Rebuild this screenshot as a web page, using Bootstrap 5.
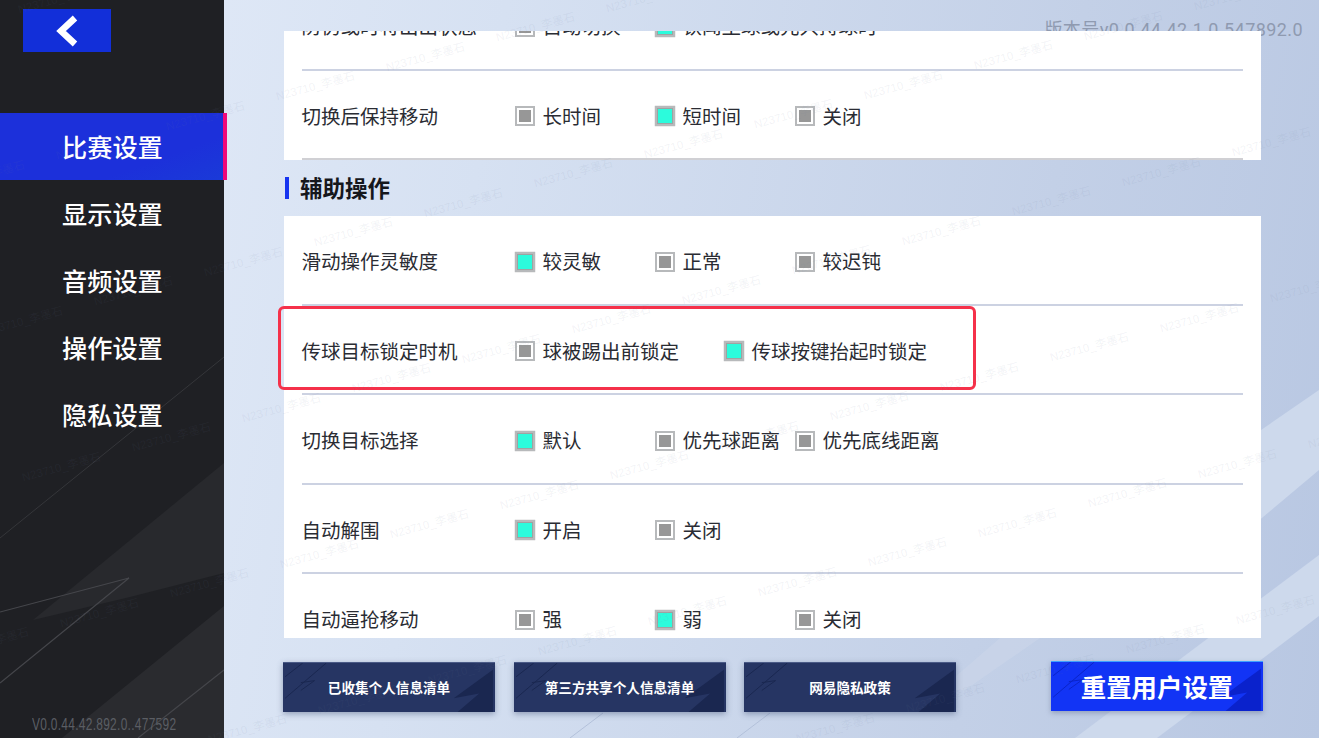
<!doctype html>
<html lang="zh-CN">
<head>
<meta charset="utf-8">
<title>设置</title>
<link rel="stylesheet" href="https://cdn.jsdelivr.net/npm/bootstrap@5.3.0/dist/css/bootstrap.min.css">
<style>
html,body{height:100%;}
body{width:1319px;height:738px;overflow:hidden;position:relative;font-family:"Noto Sans CJK SC","Noto Sans",sans-serif;color:#2a2c33;background:linear-gradient(100deg,#e4ecf9 0%,#d6e1f2 35%,#c3d0e7 75%,#b8c7e2 100%);}
.bg-art{position:absolute;left:0;top:0;width:1319px;height:738px;}
.side{width:224px;height:738px;background:#1f2024;position:relative;flex:none;}
.side-art{position:absolute;left:0;top:0;width:224px;height:738px;}
.back-btn{width:88px;height:43px;background:#122fd9;margin:9px 0 0 23px;border:0;padding:0;position:relative;}
.menu{margin-top:61px;position:relative;width:227px;}
.menu-item{height:67px;line-height:67px;font-size:25.2px;font-weight:500;color:#fff;padding-left:62px;text-decoration:none;display:block;}
.menu-item.is-on{background:linear-gradient(160deg,#1c30da 70%,#1a3ad8 100%);border-right:4px solid #f0087a;color:#fff;}
.vers{position:absolute;left:32px;bottom:1px;font-family:"Liberation Sans",sans-serif;font-weight:400;font-size:16px;color:#5b5e64;letter-spacing:.4px;white-space:nowrap;transform:scaleX(.745);transform-origin:left center;}
.main-col{width:980px;margin-left:59px;padding-top:31px;position:relative;}
.build{position:absolute;right:-40px;top:16px;font-family:Roboto,"Noto Sans CJK SC",sans-serif;font-size:18px;color:#8f9ab0;white-space:nowrap;letter-spacing:.42px;}
.sheet{width:977px;height:607px;margin-left:1px;overflow:hidden;position:relative;}
.sheet-inner{margin-top:-50px;}
.opt-block{background:#fff;}
.opt-row{height:89.5px;padding:0 18px;display:flex;align-items:flex-start;font-size:19.5px;line-height:28px;position:relative;white-space:nowrap;}
.opt-row::after{content:"";position:absolute;left:18px;right:18px;bottom:0;height:2px;background:#ccd2e2;}
.opt-row:last-child::after{height:2px;background:#d0d0d4;}
.opt-label{width:213px;padding-top:31px;flex:none;margin-left:-.5px;margin-right:.5px;}
.opt{display:flex;align-items:center;gap:7.5px;padding-top:31px;width:140px;flex:none;}
.opt.wide{width:209px;}
.box{width:20px;height:20px;border:2px solid #b7b9bb;background:#fff;padding:2px;flex:none;display:block;margin-top:1px;}
.box>i{display:block;width:100%;height:100%;background:#979797;}
.box.is-on{background:#9ea3a2;padding:1px;box-shadow:0 0 1px #999;}
.box.is-on>i{background:#2cfbdc;}
.sec-head{height:56px;display:flex;align-items:center;font-size:22.5px;font-weight:700;color:#15171c;}
.sec-head::before{content:"";width:4px;height:22px;background:#1634f0;margin-right:11px;margin-left:1px;}
.foot{margin-top:24px;display:flex;gap:18.5px;align-items:flex-start;}
.dark-btn{width:212px;height:50px;border:0;border-radius:0;position:relative;background:#263563;color:#fff;font-size:13.6px;font-weight:700;padding:0;overflow:hidden;box-shadow:0 2px 6px rgba(60,75,110,.45);border-top:1px solid #4a5a86;}
.reset-btn{width:212px;height:50px;border:0;border-radius:0;position:relative;background:#1234f5;color:#fff;font-size:25.4px;font-weight:700;padding:0;overflow:hidden;margin-top:-1px;margin-left:76.5px;box-shadow:0 2px 5px rgba(60,75,110,.35);border-top:1px solid #3fa0ff;}
.btn-art{position:absolute;left:0;top:0;width:100%;height:100%;}
.btn-txt{position:relative;}
.alert-frame{position:absolute;left:278px;top:306px;width:698px;height:84px;border:3px solid #f5314a;border-radius:6px;pointer-events:none;}
.marks{position:absolute;left:0;top:0;width:1319px;height:738px;overflow:hidden;pointer-events:none;}
.marks span{position:absolute;font-family:"Liberation Sans","Noto Sans CJK SC",sans-serif;font-size:11.5px;color:rgba(110,125,155,.09);transform:rotate(-15deg);white-space:nowrap;}
</style>
</head>
<body class="d-flex">
<svg class="bg-art" viewBox="0 0 1319 738">
  <polygon points="1319,390 1200,472 1200,570 1319,470 1319,445 1297,460 1319,448" fill="#cdd9ec"/>
  <polygon points="1319,555 1075,738 1157,738 1319,616" fill="#cdd9ec"/>
  <polygon points="1000,638 1040,638 965,690 940,690" fill="#cbd6ea" opacity=".6"/>
  <line x1="570" y1="738" x2="603" y2="713" stroke="#b3c1da"/>
  <line x1="737" y1="738" x2="770" y2="713" stroke="#b3c1da"/>
</svg>
<aside class="side">
  <svg class="side-art" viewBox="0 0 224 738">
    <polygon points="224,463 33,620 130,597 224,573" fill="#28292d"/>
    <polygon points="224,606 224,738 62,738" fill="#2a2b2f"/>
    <line x1="224" y1="357" x2="0" y2="538" stroke="#35363a"/>
    <polyline points="0,612 129,578 0,683" fill="none" stroke="#45464b" stroke-width="1.2"/>
    <line x1="224" y1="670" x2="138" y2="738" stroke="#45464b" stroke-width="1.2"/>
  </svg>
  <button class="back-btn d-block" type="button" aria-label="返回">
    <svg width="88" height="43" viewBox="0 0 88 43"><polyline points="52,9 38,22 52,35" fill="none" stroke="#fff" stroke-width="6.5" stroke-linejoin="miter"/></svg>
  </button>
  <nav class="menu nav flex-column">
    <a class="menu-item is-on" href="#">比赛设置</a>
    <a class="menu-item" href="#">显示设置</a>
    <a class="menu-item" href="#">音频设置</a>
    <a class="menu-item" href="#">操作设置</a>
    <a class="menu-item" href="#">隐私设置</a>
  </nav>
  <div class="vers">V0.0.44.42.892.0..477592</div>
</aside>
<main class="main-col">
  <div class="build">版本号v0.0.44.42.1.0.547892.0</div>
  <div class="sheet">
    <div class="sheet-inner">
      <div class="opt-block">
        <div class="opt-row"><div class="opt-label">防伪或时将出出状态</div><div class="opt"><span class="box"><i></i></span>自动切换</div><div class="opt"><span class="box is-on"><i></i></span>铁闻主球或先只持球时</div></div>
        <div class="opt-row"><div class="opt-label">切换后保持移动</div><div class="opt"><span class="box"><i></i></span>长时间</div><div class="opt"><span class="box is-on"><i></i></span>短时间</div><div class="opt"><span class="box"><i></i></span>关闭</div></div>
      </div>
      <div class="sec-head">辅助操作</div>
      <div class="opt-block">
        <div class="opt-row"><div class="opt-label">滑动操作灵敏度</div><div class="opt"><span class="box is-on"><i></i></span>较灵敏</div><div class="opt"><span class="box"><i></i></span>正常</div><div class="opt"><span class="box"><i></i></span>较迟钝</div></div>
        <div class="opt-row"><div class="opt-label">传球目标锁定时机</div><div class="opt wide"><span class="box"><i></i></span>球被踢出前锁定</div><div class="opt"><span class="box is-on"><i></i></span>传球按键抬起时锁定</div></div>
        <div class="opt-row"><div class="opt-label">切换目标选择</div><div class="opt"><span class="box is-on"><i></i></span>默认</div><div class="opt"><span class="box"><i></i></span>优先球距离</div><div class="opt"><span class="box"><i></i></span>优先底线距离</div></div>
        <div class="opt-row"><div class="opt-label">自动解围</div><div class="opt"><span class="box is-on"><i></i></span>开启</div><div class="opt"><span class="box"><i></i></span>关闭</div></div>
        <div class="opt-row"><div class="opt-label">自动逼抢移动</div><div class="opt"><span class="box"><i></i></span>强</div><div class="opt"><span class="box is-on"><i></i></span>弱</div><div class="opt"><span class="box"><i></i></span>关闭</div></div>
      </div>
    </div>
  </div>
  <div class="foot">
    <button class="dark-btn" type="button"><svg class="btn-art" viewBox="0 0 212 50"><path d="M0 14 18 0M0 36 42 0M16 20 30 18 16 28" stroke="#1a2750" fill="none"/><polygon points="212,7 172,36 198,31 176,50 212,50" fill="#1a2750"/></svg><span class="btn-txt">已收集个人信息清单</span></button>
    <button class="dark-btn" type="button"><svg class="btn-art" viewBox="0 0 212 50"><path d="M0 14 18 0M0 36 42 0M16 20 30 18 16 28" stroke="#1a2750" fill="none"/><polygon points="212,7 172,36 198,31 176,50 212,50" fill="#1a2750"/></svg><span class="btn-txt">第三方共享个人信息清单</span></button>
    <button class="dark-btn" type="button"><svg class="btn-art" viewBox="0 0 212 50"><path d="M0 14 18 0M0 36 42 0M16 20 30 18 16 28" stroke="#1a2750" fill="none"/><polygon points="212,7 172,36 198,31 176,50 212,50" fill="#1a2750"/></svg><span class="btn-txt">网易隐私政策</span></button>
    <button class="reset-btn" type="button"><svg class="btn-art" viewBox="0 0 212 50"><path d="M0 14 18 0M0 36 42 0M16 20 30 18 16 28" stroke="#0a24c8" fill="none"/><polygon points="212,7 172,36 198,31 176,50 212,50" fill="#0a22cc"/></svg><span class="btn-txt">重置用户设置</span></button>
  </div>
</main>
<div class="alert-frame"></div>
<div class="marks" id="marks"></div>
<script src="https://cdn.jsdelivr.net/npm/bootstrap@5.3.0/dist/js/bootstrap.bundle.min.js"></script>
<script>
(function(){
  var host=document.getElementById('marks');
  for(var k=-2;k<7;k++){for(var i=-6;i<12;i++){
    var x=312+38*k+110*i, y=86+146*k-29.5*i;
    if(x<-60||x>1380||y<-20||y>750)continue;
    var s=document.createElement('span');
    s.textContent='N23710_李墨石';
    s.style.left=(x-37)+'px'; s.style.top=(y-8)+'px';
    host.appendChild(s);
  }}
})();
</script>
</body>
</html>
